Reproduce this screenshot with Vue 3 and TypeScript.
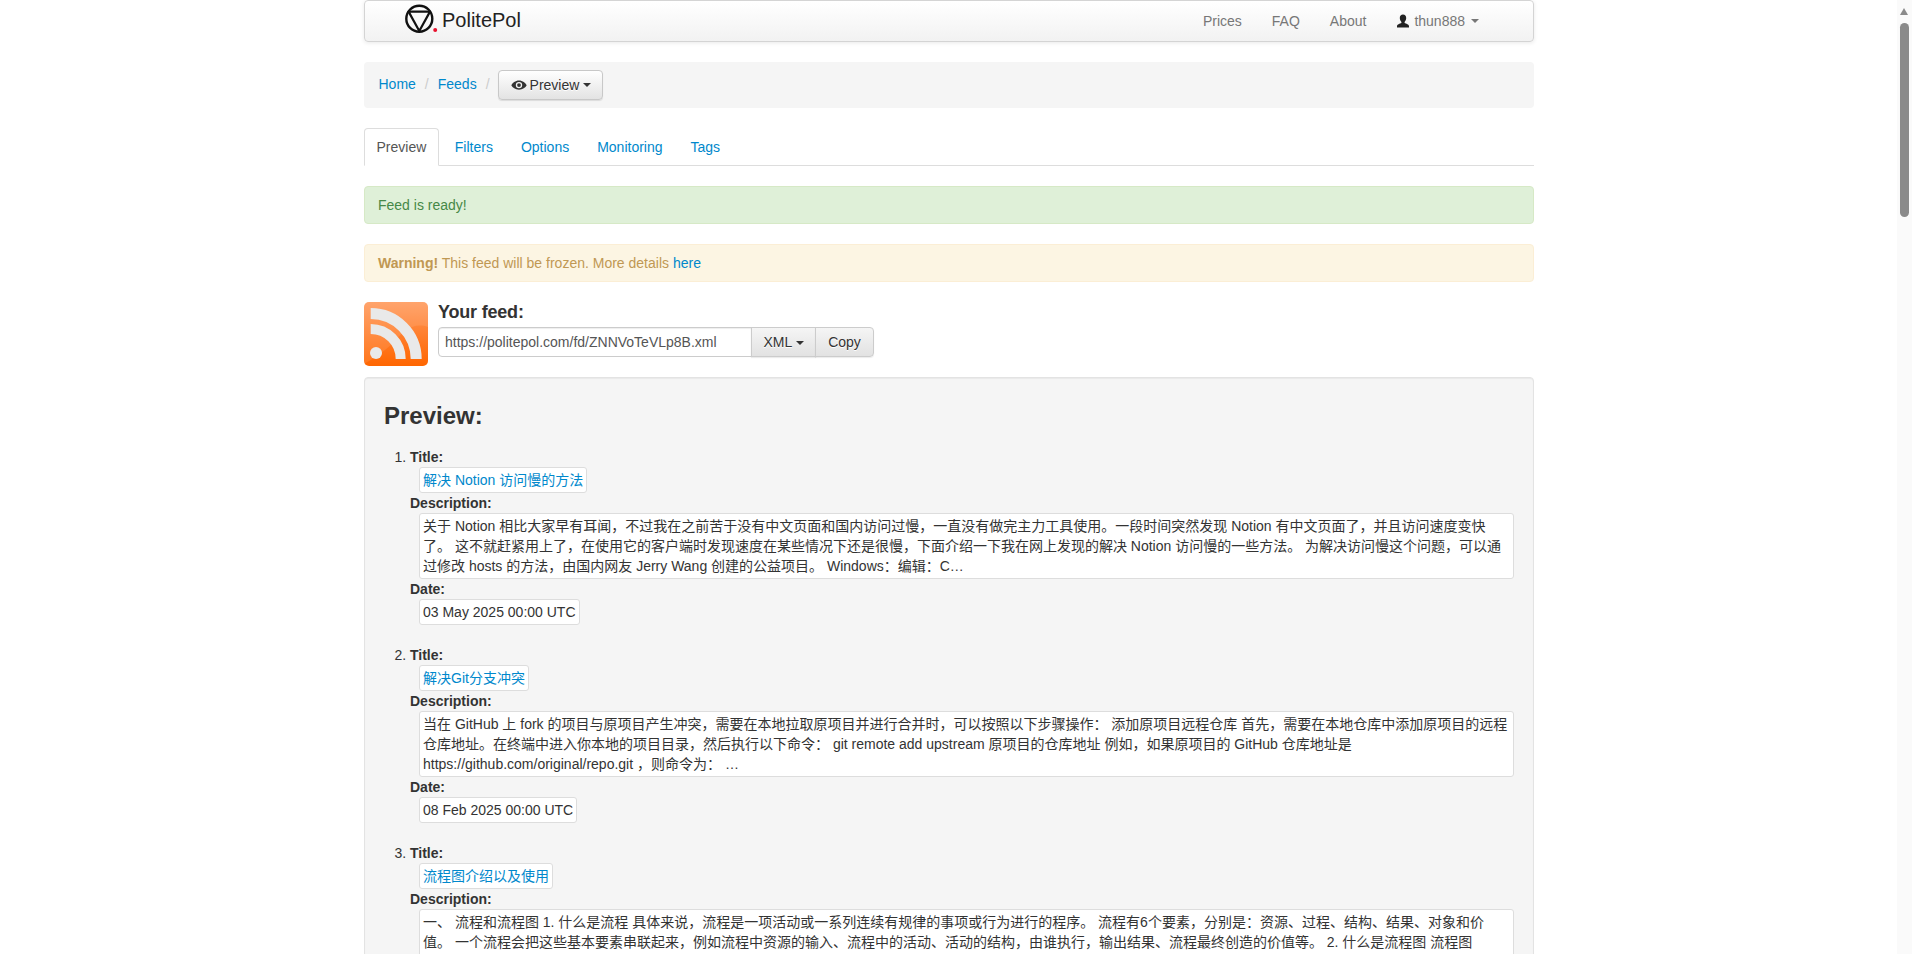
<script setup lang="ts">
interface FeedItem {
  title: string;
  description: string;
  date: string;
}

const navLinks: string[] = ["Prices", "FAQ", "About"];
const tabs: string[] = ["Preview", "Filters", "Options", "Monitoring", "Tags"];

const items: FeedItem[] = [
  {
    title: "解决 Notion 访问慢的方法",
    description:
      "关于 Notion 相比大家早有耳闻，不过我在之前苦于没有中文页面和国内访问过慢，一直没有做完主力工具使用。一段时间突然发现 Notion 有中文页面了，并且访问速度变快了。 这不就赶紧用上了，在使用它的客户端时发现速度在某些情况下还是很慢，下面介绍一下我在网上发现的解决 Notion 访问慢的一些方法。 为解决访问慢这个问题，可以通过修改 hosts 的方法，由国内网友 Jerry Wang 创建的公益项目。 Windows：编辑：C…",
    date: "03 May 2025 00:00 UTC",
  },
  {
    title: "解决Git分支冲突",
    description:
      "当在 GitHub 上 fork 的项目与原项目产生冲突，需要在本地拉取原项目并进行合并时，可以按照以下步骤操作： 添加原项目远程仓库 首先，需要在本地仓库中添加原项目的远程仓库地址。在终端中进入你本地的项目目录，然后执行以下命令： git remote add upstream 原项目的仓库地址 例如，如果原项目的 GitHub 仓库地址是 https://github.com/original/repo.git ，则命令为：  …",
    date: "08 Feb 2025 00:00 UTC",
  },
  {
    title: "流程图介绍以及使用",
    description:
      "一、 流程和流程图 1. 什么是流程 具体来说，流程是一项活动或一系列连续有规律的事项或行为进行的程序。 流程有6个要素，分别是：资源、过程、结构、结果、对象和价值。 一个流程会把这些基本要素串联起来，例如流程中资源的输入、流程中的活动、活动的结构，由谁执行，输出结果、流程最终创造的价值等。 2. 什么是流程图 流程图 Flowchart",
    date: "15 Jan 2025 00:00 UTC",
  },
];
</script>

<template>
  <div class="page">
    <div class="container">
      <nav class="navbar">
        <a class="brand">
          <svg class="logo" width="34" height="30" viewBox="0 0 34 30" aria-hidden="true">
            <circle cx="14.300" cy="14.700" r="13" fill="none" stroke="#111" stroke-width="2.400" />
            <path d="M3.600 7.600H25L14.300 27Z" fill="none" stroke="#111" stroke-width="2.200" stroke-linejoin="round" />
            <circle cx="30.200" cy="26" r="2" fill="#e8112d" />
          </svg>
          <span>PolitePol</span>
        </a>
        <ul class="nav-links">
          <li v-for="link in navLinks" :key="link"><a>{{ link }}</a></li>
          <li>
            <a class="user">
              <svg width="14" height="14" viewBox="0 0 14 14" aria-hidden="true">
                <path
                  d="M7 .6c2 0 3.200 1.500 3.200 3.500 0 1.500-.7 3-1.600 3.800v1.200c1.500.7 4.400 1.300 4.400 3.200v1.100H1v-1.100c0-1.900 2.900-2.500 4.400-3.200V7.900C4.500 7.100 3.800 5.600 3.800 4.100 3.800 2.100 5 .6 7 .6Z"
                  fill="#222"
                />
              </svg>
              <span>thun888</span>
              <i class="caret caret-light"></i>
            </a>
          </li>
        </ul>
      </nav>

      <div class="breadcrumb">
        <a class="crumb">Home</a>
        <span class="sep">/</span>
        <a class="crumb">Feeds</a>
        <span class="sep last">/</span>
        <button class="btn btn-light" type="button">
          <svg width="16" height="14" viewBox="0 0 16 14" aria-hidden="true">
            <path
              d="M8 2.400C4.300 2.400 1.500 4.800.3 7.300c1.200 2.400 4 4.400 7.700 4.400s6.500-2 7.700-4.400C14.500 4.800 11.700 2.400 8 2.400Zm0 7.900a3.200 3.200 0 1 1 0-6.400 3.200 3.200 0 0 1 0 6.400Z"
              fill="#333"
            />
            <circle cx="8" cy="7.100" r="1.900" fill="#333" />
          </svg>
          <span>Preview</span>
          <i class="caret"></i>
        </button>
      </div>

      <ul class="tabs">
        <li v-for="(tab, i) in tabs" :key="tab" :class="{ active: i === 0 }"><a>{{ tab }}</a></li>
      </ul>

      <div class="alert alert-success">Feed is ready!</div>
      <div class="alert alert-warning"><strong>Warning!</strong> This feed will be frozen. More details <a>here</a></div>

      <div class="feed">
        <svg class="rss" width="64" height="64" viewBox="0 0 64 64" aria-hidden="true">
          <defs>
            <linearGradient id="rssBg" x1="0" y1="0" x2="0" y2="1">
              <stop offset="0" stop-color="#ff9a5c" />
              <stop offset="0.5" stop-color="#ff7f2e" />
              <stop offset="1" stop-color="#ff6600" />
            </linearGradient>
          </defs>
          <rect width="64" height="64" rx="5" fill="url(#rssBg)" />
          <path d="M0 62V5a5 5 0 0 1 5-5h54a5 5 0 0 1 5 5v20C50 20 40 28 30 40 20 50 10 56 0 62Z" fill="#fff" opacity=".1" />
          <g fill="none" stroke="#e9e9e9">
            <path d="M6.700 27A30 30 0 0 1 36.700 57" stroke-width="10" />
            <path d="M6.700 11.500A45.500 45.500 0 0 1 52.200 57" stroke-width="11" />
          </g>
          <circle cx="12" cy="51" r="6" fill="#e9e9e9" />
        </svg>
        <div class="feed-body">
          <h4>Your feed:</h4>
          <div class="input-group">
            <input class="feed-url" type="text" readonly value="https://politepol.com/fd/ZNNVoTeVLp8B.xml" />
            <button class="btn btn-grey btn-mid" type="button">XML <i class="caret"></i></button>
            <button class="btn btn-grey btn-end" type="button">Copy</button>
          </div>
        </div>
      </div>

      <section class="well">
        <h3>Preview:</h3>
        <ol>
          <li v-for="item in items" :key="item.title">
            <dl>
              <dt>Title:</dt>
              <dd class="fit"><a>{{ item.title }}</a></dd>
              <dt>Description:</dt>
              <dd>{{ item.description }}</dd>
              <dt>Date:</dt>
              <dd class="fit">{{ item.date }}</dd>
            </dl>
          </li>
        </ol>
      </section>
    </div>

    <div class="scrollbar" aria-hidden="true">
      <span class="arrow"></span>
      <span class="thumb"></span>
    </div>
  </div>
</template>

<style>
html,
body {
  margin: 0;
  height: 954px;
  overflow: hidden;
  background: #fff;
}
</style>

<style scoped>
.page {
  position: relative;
  height: 954px;
  overflow: hidden;
  padding-right: 14px;
  box-sizing: border-box;
  font-family: "Liberation Sans", "Noto Sans CJK SC", sans-serif;
  font-size: 14px;
  line-height: 20px;
  color: #333;
  background: #fff;
}
.container {
  width: 1170px;
  margin: 0 auto;
}
a {
  color: #0088cc;
  text-decoration: none;
}

.navbar {
  display: flex;
  align-items: center;
  justify-content: space-between;
  height: 42px;
  box-sizing: border-box;
  margin-bottom: 20px;
  padding-right: 39px;
  border: 1px solid #d4d4d4;
  border-radius: 4px;
  background: linear-gradient(to bottom, #ffffff, #f2f2f2);
  box-shadow: 0 1px 4px rgba(0, 0, 0, 0.09);
}
.brand {
  display: flex;
  align-items: center;
  margin-left: 40px;
  color: #222;
  font-size: 20px;
}
.logo {
  margin-right: 3px;
  margin-top: -4px;
}
.brand span {
  position: relative;
  top: -1px;
  font-size: 20px;
}
.nav-links {
  display: flex;
  list-style: none;
  margin: 0;
  padding: 0;
}
.nav-links a {
  display: flex;
  align-items: center;
  padding: 0 15px;
  color: #777;
}
.user svg {
  margin-right: 4px;
}
.caret {
  display: inline-block;
  width: 0;
  height: 0;
  border-top: 4px solid #333;
  border-left: 4px solid transparent;
  border-right: 4px solid transparent;
  vertical-align: middle;
}
.caret-light {
  margin-left: 6px;
  border-top-color: #777;
}

.breadcrumb {
  display: flex;
  align-items: center;
  height: 46px;
  box-sizing: border-box;
  margin-bottom: 20px;
  padding: 0 14.500px;
  border-radius: 4px;
  background: #f5f5f5;
}
.crumb,
.sep {
  margin-top: -2px;
}
.sep {
  margin-left: 9px;
  margin-right: 9px;
  color: #ccc;
}
.sep.last {
  margin-right: 8px;
}
.btn {
  height: 30px;
  box-sizing: border-box;
  padding: 4px 12px;
  border: 1px solid #ccc;
  border-radius: 4px;
  font: inherit;
  color: #333;
  text-shadow: 0 1px 0 #fff;
  white-space: nowrap;
}
.btn-light {
  display: flex;
  align-items: center;
  gap: 3px;
  padding: 0 11px 0 12px;
  border-color: #c8c8c8;
  background: linear-gradient(to bottom, #ffffff, #e3e3e3);
  box-shadow: 0 1px 1px rgba(0, 0, 0, 0.1);
}
.btn-light .caret {
  margin-left: 1px;
}
.btn-grey {
  background: linear-gradient(to bottom, #f5f5f5, #e2e2e2);
  box-shadow: 0 1px 1px rgba(0, 0, 0, 0.08);
}
.btn-mid {
  margin-left: -1px;
  padding-left: 11.500px;
  padding-right: 11.500px;
  border-radius: 0;
}
.btn-end {
  margin-left: -1px;
  border-radius: 0 4px 4px 0;
}

.tabs {
  display: flex;
  list-style: none;
  margin: 0 0 20px;
  padding: 0;
  height: 38px;
  border-bottom: 1px solid #ddd;
  box-sizing: border-box;
}
.tabs li {
  margin-right: 2px;
}
.tabs li.active {
  margin-right: 3px;
}
.tabs a {
  display: block;
  height: 38px;
  box-sizing: border-box;
  padding: 8px 12px;
  border: 1px solid transparent;
  border-radius: 4px 4px 0 0;
}
.tabs .active a {
  padding: 8px 11.500px;
  color: #555;
  background: #fff;
  border-color: #ddd #ddd #fff;
}

.alert {
  height: 38px;
  box-sizing: border-box;
  margin-bottom: 20px;
  padding: 8px 13px;
  border: 1px solid;
  border-radius: 4px;
}
.alert-success {
  color: #468847;
  background: #dff0d8;
  border-color: #d6e9c6;
}
.alert-warning {
  color: #c09853;
  background: #fcf5e3;
  border-color: #fbeed5;
}

.feed {
  display: flex;
  gap: 10px;
  margin-bottom: 11px;
  height: 64px;
}
.rss {
  flex: none;
}
h4 {
  margin: 0 0 4px;
  font-size: 18px;
  line-height: 21px;
  font-weight: 700;
  letter-spacing: -0.2px;
}
.input-group {
  display: flex;
}
.feed-url {
  width: 314px;
  height: 30px;
  box-sizing: border-box;
  padding: 4px 6px;
  border: 1px solid #ccc;
  border-radius: 4px 0 0 4px;
  font: inherit;
  color: #555;
  background: #fff;
  box-shadow: inset 0 1px 1px rgba(0, 0, 0, 0.07);
  outline: none;
}

.well {
  padding: 25px 19px 19px;
  border: 1px solid #e3e3e3;
  border-radius: 4px;
  background: #f5f5f5;
  box-shadow: inset 0 1px 1px rgba(0, 0, 0, 0.05);
}
h3 {
  margin: 0 0 18px;
  font-size: 24px;
  line-height: 26px;
  font-weight: 700;
}
ol {
  margin: 0;
  padding: 0 0 0 26px;
}
dl {
  margin: 0 0 20px;
}
dt {
  font-weight: 700;
}
dd {
  margin: 0 0 0 9px;
  padding: 2px 3px;
  border: 1px solid #ddd;
  border-radius: 3px;
  background: #fff;
}
dd.fit {
  width: fit-content;
}

.scrollbar {
  position: absolute;
  top: 0;
  right: 0;
  bottom: 0;
  width: 15px;
  background: #fafafa;
}
.arrow {
  position: absolute;
  top: 8px;
  left: 3px;
  border-left: 4.500px solid transparent;
  border-right: 4.500px solid transparent;
  border-bottom: 7px solid #8a8a8a;
}
.thumb {
  position: absolute;
  top: 23px;
  left: 3px;
  width: 9px;
  height: 194px;
  border-radius: 4.500px;
  background: #8a8a8a;
}
</style>
